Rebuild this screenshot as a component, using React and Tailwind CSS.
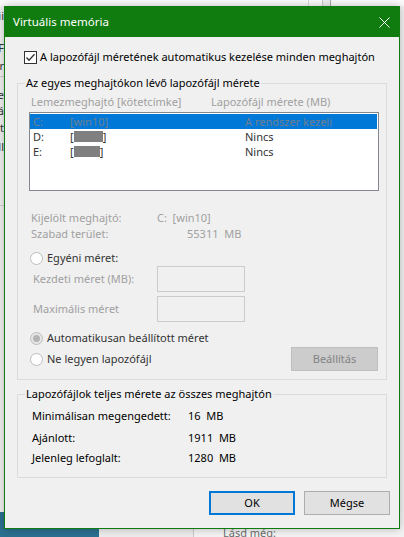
import React from "react";

function CheckBox() {
  return (
    <svg width="13" height="13" viewBox="0 0 13 13" className="shrink-0">
      <rect x="0.5" y="0.5" width="12" height="12" fill="#ffffff" stroke="#333333" />
      <path d="M2.5 6.5 L5 9.2 L10.5 3.2" fill="none" stroke="#333333" strokeWidth="1.3" />
    </svg>
  );
}

function Radio({ checked }) {
  return (
    <svg width="13" height="13" viewBox="0 0 13 13" className="shrink-0">
      <circle cx="6.5" cy="6.5" r="6" fill={checked ? "#e6e6e6" : "#ffffff"} stroke="#bcbcbc" />
      {checked && <circle cx="6.5" cy="6.5" r="3.5" fill="#b4b4b4" />}
    </svg>
  );
}

function Hidden({ w }) {
  return <span className="inline-block h-[11px] bg-[#808080]" style={{ width: w }} />;
}

function DriveRow({ letter, label, size, selected, maskW }) {
  return (
    <div
      className={
        selected
          ? "flex h-[15px] items-center bg-[#0078d7] pl-[3px] text-[#6f7f8f]"
          : "flex h-[15px] items-center pl-[3px] text-[#333333]"
      }
    >
      <span className="w-[37px]">{letter}</span>
      <span className="flex w-[175px] items-center">
        {label ? (
          label
        ) : (
          <>
            [<Hidden w={maskW} />]
          </>
        )}
      </span>
      <span>{size}</span>
    </div>
  );
}

function Dialog() {
  return (
    <div className="absolute left-[4px] top-[6px] flex h-[523px] w-[396px] flex-col border border-[#107c10] bg-[#f0f0f0] shadow-[0_0_8px_rgba(0,0,0,0.25)]">
      {/* title bar */}
      <div className="flex h-[30px] shrink-0 items-center justify-between bg-[#107c10] pl-[8px] pr-[9px] text-[11.5px] text-white">
        <span>Virtuális memória</span>
        <svg width="11" height="11" viewBox="0 0 11 11">
          <path d="M0.5 0.5 L10.5 10.5 M10.5 0.5 L0.5 10.5" stroke="#ffffff" strokeWidth="1" />
        </svg>
      </div>

      {/* automatic paging checkbox */}
      <div className="mt-[12px] flex h-[16px] items-center gap-[3px] pl-[19px] text-black">
        <CheckBox />
        <span className="whitespace-nowrap">A lapozófájl méretének automatikus kezelése minden meghajtón</span>
      </div>

      {/* per-drive paging file */}
      <fieldset className="mx-[12px] mt-[10px] border border-[#dcdcdc] pb-[8px] pl-[11px] pr-[7px]">
        <legend className="ml-[-4px] px-[1px] text-black">Az egyes meghajtókon lévő lapozófájl mérete</legend>
        <div className="mt-[3px] flex h-[16px] pl-[2px] text-[#a0a0a0]">
          <span className="w-[180px]">Lemezmeghajtó [kötetcímke]</span>
          <span>Lapozófájl mérete (MB)</span>
        </div>
        <div className="mt-[2px] h-[79px] w-[350px] border border-[#828790] bg-white pr-[1px] pt-[1px]">
          <DriveRow letter="C:" label="[win10]" size="A rendszer kezeli" selected />
          <DriveRow letter="D:" size="Nincs" maskW={29} />
          <DriveRow letter="E:" size="Nincs" maskW={26} />
        </div>

        <div className="mt-[19px] flex h-[16px] pl-[2px] text-[#a0a0a0]">
          <span className="w-[126px]">Kijelölt meghajtó:</span>
          <span className="whitespace-pre">C:  [win10]</span>
        </div>
        <div className="flex h-[16px] pl-[2px] text-[#a0a0a0]">
          <span className="w-[156px]">Szabad terület:</span>
          <span className="whitespace-pre">55311  MB</span>
        </div>

        <div className="mt-[8px] flex h-[16px] items-center gap-[4px] pl-[1px] text-[#333333]">
          <Radio />
          <span>Egyéni méret:</span>
        </div>
        <div className="flex h-[26px] items-center pl-[4px] text-[#a0a0a0]">
          <span className="w-[124px]">Kezdeti méret (MB):</span>
          <div className="h-[26px] w-[88px] border border-[#cccccc] bg-[#f0f0f0]" />
        </div>
        <div className="mt-[4px] flex h-[26px] items-center pl-[4px] text-[#a0a0a0]">
          <span className="w-[124px]">Maximális méret</span>
          <div className="h-[26px] w-[88px] border border-[#cccccc] bg-[#f0f0f0]" />
        </div>

        <div className="mt-[8px] flex h-[16px] items-center gap-[4px] pl-[1px] text-[#333333]">
          <Radio checked />
          <span>Automatikusan beállított méret</span>
        </div>
        <div className="mt-[1px] flex h-[24px] w-[350px] items-center justify-between pl-[1px] pr-[1px]">
          <div className="flex items-center gap-[4px] text-[#333333]">
            <Radio />
            <span>Ne legyen lapozófájl</span>
          </div>
          <div className="flex h-[24px] w-[87px] items-center justify-center border border-[#bfbfbf] bg-[#cccccc] text-[#838383]">
            Beállítás
          </div>
        </div>
      </fieldset>

      {/* totals for all drives */}
      <fieldset className="mx-[12px] mt-[6px] border border-[#dcdcdc] pb-[11px] pl-[14px] text-black">
        <legend className="ml-[-7px] px-[1px]">Lapozófájlok teljes mérete az összes meghajtón</legend>
        <div className="mt-[6px] flex h-[16px]">
          <span className="w-[156px]">Minimálisan megengedett:</span>
          <span className="whitespace-pre">16  MB</span>
        </div>
        <div className="mt-[6px] flex h-[16px]">
          <span className="w-[156px]">Ajánlott:</span>
          <span className="whitespace-pre">1911  MB</span>
        </div>
        <div className="mt-[4px] flex h-[16px]">
          <span className="w-[156px]">Jelenleg lefoglalt:</span>
          <span className="whitespace-pre">1280  MB</span>
        </div>
      </fieldset>

      <div className="mt-[13px] flex justify-end gap-[9px] pr-[9px]">
        <button className="flex h-[24px] w-[86px] items-center justify-center border-2 border-[#0078d7] bg-[#e1e1e1] text-black">
          OK
        </button>
        <button className="flex h-[24px] w-[86px] items-center justify-center border border-[#adadad] bg-[#e1e1e1] text-black">
          Mégse
        </button>
      </div>
    </div>
  );
}

function BackWindow() {
  return (
    <>
      {/* system window behind the dialog */}
      <div className="absolute left-0 top-0 flex h-[512px] w-[404px] flex-col bg-[#f0f0f0]">
        <div className="flex h-[6px] bg-[#fbfbfb]">
          <div className="w-[308px]" />
          <div className="w-[1px] bg-[#d9d9d9]" />
          <div className="w-[13px]" />
          <div className="w-[1px] bg-[#c8c8c8]" />
          <div className="w-[7px] bg-[#eeeeee]" />
          <div className="w-[1px] bg-[#a8a8a8]" />
        </div>
        <div className="flex w-[4px] flex-col overflow-hidden text-[#333333]">
          <div className="flex h-[20px] items-center justify-end">ii</div>
          <div className="flex h-[30px] items-end justify-end">FF</div>
          <div className="flex h-[20px] items-center justify-end">rr</div>
          <div className="h-[1px] w-[4px] bg-[#d0d0d0]" />
          <div className="flex h-[26px] items-end justify-end">ee</div>
          <div className="flex h-[16px] items-center justify-end">áá</div>
          <div className="flex h-[18px] items-center justify-end">tt</div>
          <div className="flex h-[20px] items-center justify-end">ll</div>
          <div className="mt-[48px] h-[1px] w-[4px] bg-[#d0d0d0]" />
        </div>
      </div>
      {/* lower window strip with the "see also" pane */}
      <div className="absolute left-[99px] top-[512px] flex h-[25px] w-[305px] bg-[#ececec]">
        <div className="w-[94px]" />
        <div className="w-[1px] bg-[#c8c8c8]" />
        <div className="flex-1 bg-[#f3f3f3] pl-[29px] pt-[13px] text-[#6d6d6d]">Lásd még:</div>
      </div>
    </>
  );
}

export default function App() {
  return (
    <div className="relative h-[537px] w-[404px] overflow-hidden bg-[#2a6f8f] font-['Noto_Sans',sans-serif] text-[11px] leading-[16px]">
      <BackWindow />
      <Dialog />
    </div>
  );
}
